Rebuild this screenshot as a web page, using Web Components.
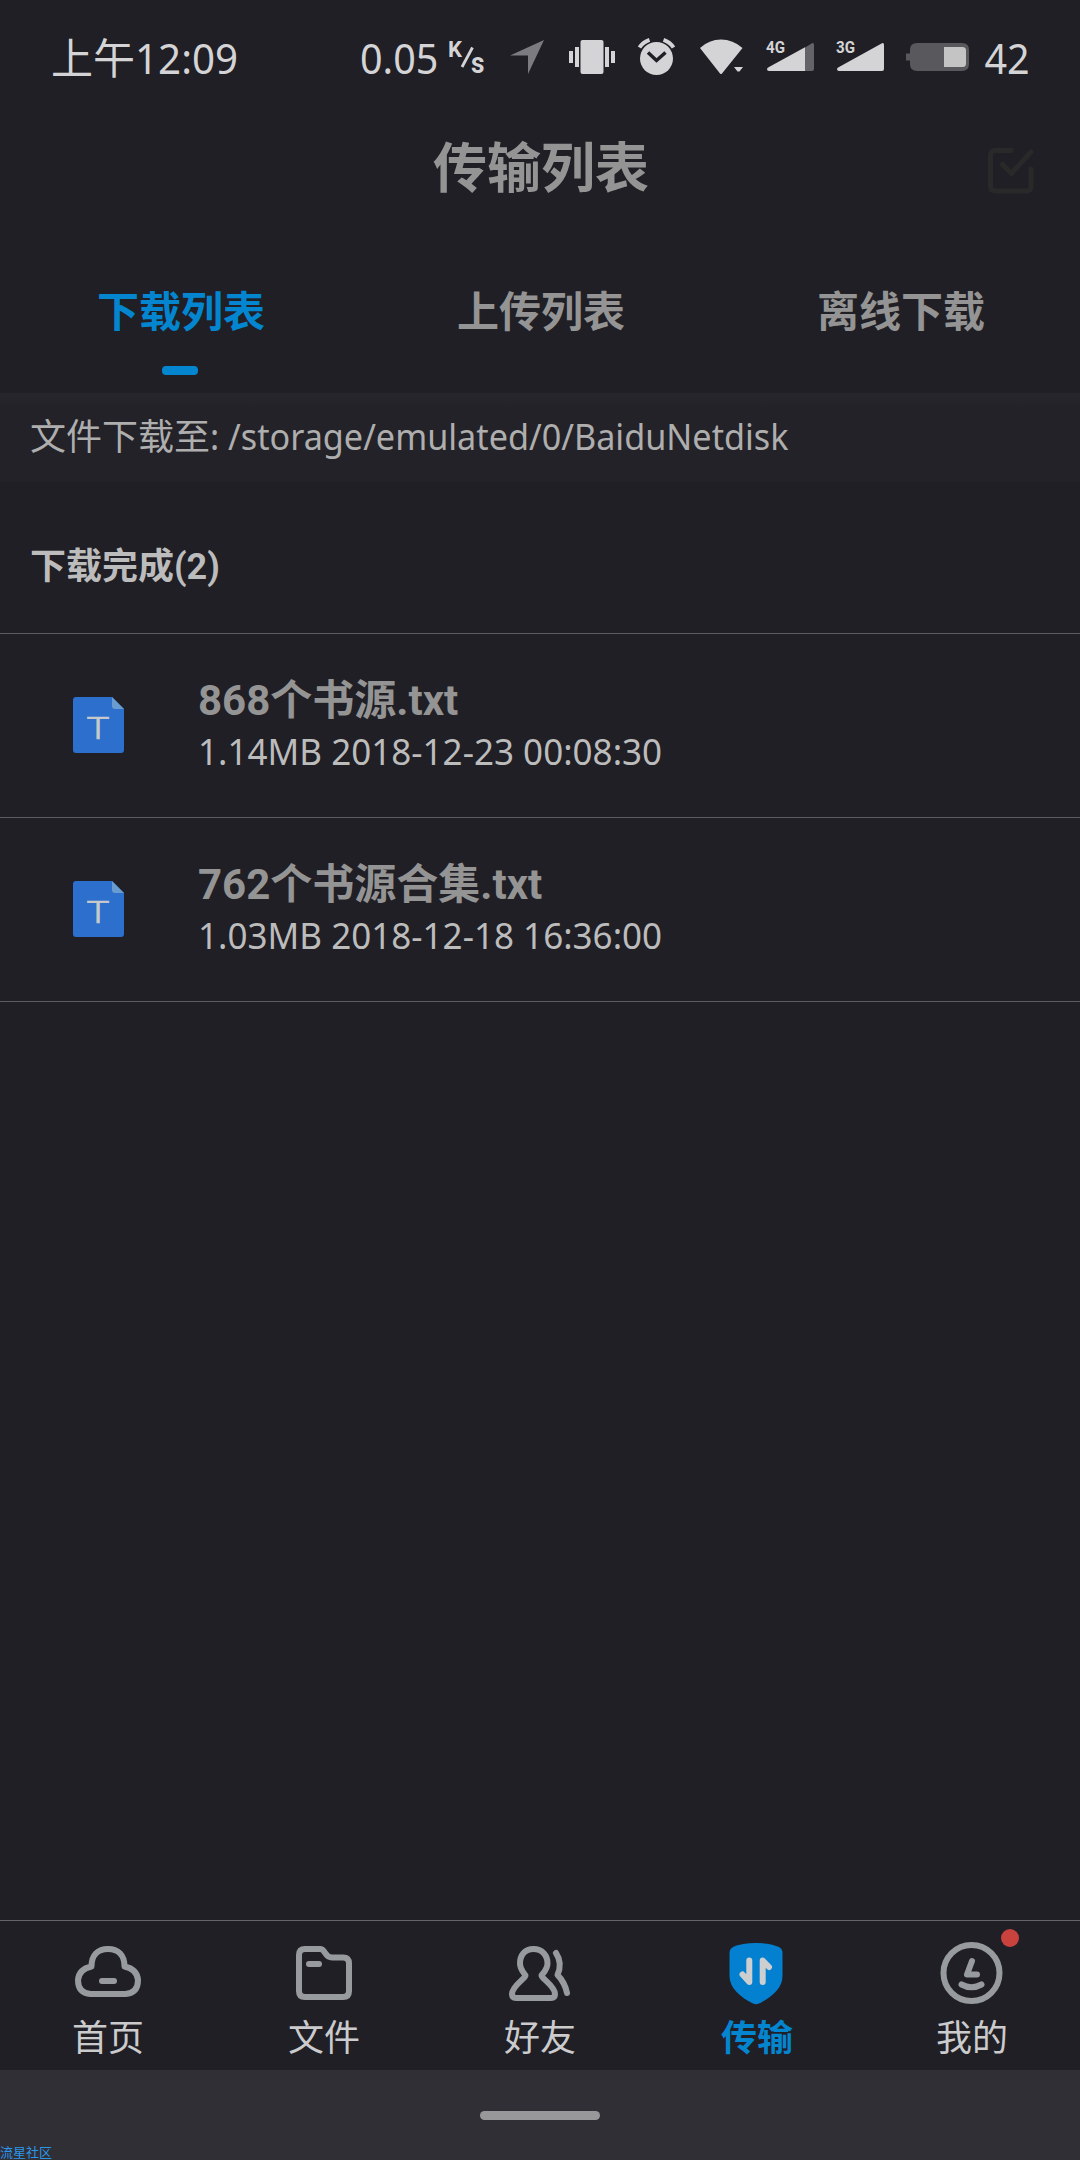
<!DOCTYPE html>
<html lang="zh-CN">
<head>
<meta charset="utf-8">
<title>传输列表</title>
<style>
	html,
	body {
		margin: 0;
		height: 100%;
		background: #201f25;
	}
	body {
		font-family: "Noto Sans", "Noto Sans CJK SC", sans-serif;
		color: #bcbcbc;
	}
</style>
</head>
<body>
<transfer-app></transfer-app>

<script>
// ─── Helpers ─────────────────────────────────────────────────────────────────

/**
 * @param {string} tag
 * @param {(el: HTMLElement) => string} render
 */
function define(tag, render) {
	customElements.define(
		tag,
		class extends HTMLElement {
			connectedCallback() {
				if (this.shadowRoot) return;
				this.attachShadow({ mode: "open" }).innerHTML = render(this);
			}
		},
	);
}

// Latin text is set slightly narrower than Noto Sans comes by default
define("narrow-text", (el) => `
	<style>
		:host {
			display: inline-block;
			transform: scaleX(${el.getAttribute("scale")});
			transform-origin: ${el.getAttribute("origin") ?? "left"};
			white-space: nowrap;
		}
	</style>
	<slot></slot>
`);

// ─── Status bar ──────────────────────────────────────────────────────────────

define("status-bar", () => `
	<style>
		:host {
			display: flex;
			align-items: center;
			height: 116px;
			box-sizing: border-box;
			padding: 0 49px 0 51px;
			font-size: 42px;
			line-height: 50px;
			color: #d4d4d6;
			white-space: nowrap;
		}
		.time { flex: 1; }
		svg { display: block; flex: none; fill: #d4d4d6; overflow: visible; }
		text { font-family: Roboto, sans-serif; font-weight: 700; }
		.rate { margin-right: 9px; }
		.level { width: 48px; }
	</style>
	<span class="time">上午<narrow-text scale=".96">12:09</narrow-text></span>
	<span class="rate"><narrow-text scale=".94" origin="right">0.05</narrow-text></span>
	<svg width="38" height="40" style="margin-right:25px">
		<text x="1" y="19" font-size="22" textLength="14" lengthAdjust="spacingAndGlyphs">K</text>
		<path d="M15 29 25.500 9.500" stroke="#d4d4d6" stroke-width="2.800"/>
		<text x="24" y="34.500" font-size="29" textLength="13.500" lengthAdjust="spacingAndGlyphs">s</text>
	</svg>
	<svg width="34" height="40" style="margin-right:25px">
		<path fill="#7c7b80" d="M0 17.500 34 2 18 36V17.500z"/>
	</svg>
	<svg width="46" height="40" style="margin-right:23px">
		<rect y="13" width="4" height="12"/>
		<rect x="6" y="9" width="4" height="20"/>
		<rect x="11.500" y="2" width="23" height="34" rx="2"/>
		<rect x="36" y="9" width="4" height="20"/>
		<rect x="42" y="13" width="4" height="12"/>
	</svg>
	<svg width="37" height="40" style="margin-right:25px">
		<circle cx="18.500" cy="20.500" r="16.500"/>
		<path fill="none" stroke="#201f25" stroke-width="3.500" d="m10 14.500 8.500 8 9-8"/>
		<path fill="none" stroke="#d4d4d6" stroke-width="4" d="M1.500 9.500Q5 4 11.500 1.800M35.500 9.500Q32 4 25.500 1.800"/>
	</svg>
	<svg width="43" height="40" style="margin-right:23px">
		<path d="M0 10Q9 1.500 21 1.500T42.500 10L22 35.500Q21 36.500 20 35.500zM34 29h9l-3.500 4.500h-2z"/>
	</svg>
	<svg width="48" height="40" style="margin-right:22px">
		<text y="15" font-size="17" textLength="19" lengthAdjust="spacingAndGlyphs">4G</text>
		<path fill="#646368" d="M39 9.500 46 5.200Q48 4.500 48 7V31q0 2-2 2H39z"/>
		<path d="M39 9.300V33H3Q1 33 1 31 1 30 3 29z"/>
	</svg>
	<svg width="48" height="40" style="margin-right:22px">
		<text y="15" font-size="17" textLength="19" lengthAdjust="spacingAndGlyphs">3G</text>
		<path d="M3 29 46 5.200Q48 4.500 48 7V31q0 2-2 2H3Q1 33 1 31 1 30 3 29z"/>
	</svg>
	<svg width="63" height="40" style="margin-right:14px">
		<path fill="#59585c" d="M0 15.500h4V12q0-7 7-7H56q7 0 7 7V26q0 7-7 7H11q-7 0-7-7V22.500H0z"/>
		<path fill="#c4c4c4" d="M38 9H56.500Q60 9 60 12.500V25.500Q60 29 56.500 29H38z"/>
	</svg>
	<span class="level"><narrow-text scale=".94" origin="center">42</narrow-text></span>
`);

// ─── Title and tabs ──────────────────────────────────────────────────────────

define("title-bar", () => `
	<style>
		:host {
			display: grid;
			grid-template-columns: 1fr auto 1fr;
			align-items: center;
			height: 106px;
			padding: 0 45px;
			color: #949494;
		}
		h1 { grid-column: 2; margin: 0 0 4px 2px; font-size: 54px; line-height: 70px; font-weight: 700; }
		svg { justify-self: end; margin-top: 3px; }
	</style>
	<h1><slot></slot></h1>
	<svg width="48" height="48" fill="none" stroke="#292929" stroke-width="5" stroke-linecap="round" stroke-linejoin="round">
		<path d="M24 3.500H8.500Q3.500 3.500 3.500 8.500V39Q3.500 44 8.500 44H39Q44 44 44 39V22"/>
		<path d="m15.500 17.500 9 9L44 5"/>
	</svg>
`);

define("tab-item", (el) => `
	<style>
		:host {
			flex: 1;
			display: flex;
			flex-direction: column;
			align-items: center;
			padding-top: 59px;
			font-size: 42px;
			line-height: 60px;
			font-weight: 700;
			color: #949494;
		}
		:host([active]) { color: #0385d0; }
		span { padding-left: 2px; }
		i { width: 36px; height: 9px; margin-top: 25px; border-radius: 4px; background: currentColor; }
	</style>
	<span><slot></slot></span>
	${el.hasAttribute("active") ? "<i></i>" : ""}
`);

define("tab-strip", () => `
	<style>
		:host { display: flex; height: 171px; }
	</style>
	<slot></slot>
`);

// ─── Download list ───────────────────────────────────────────────────────────

define("path-bar", () => `
	<style>
		:host {
			display: block;
			height: 89px;
			padding-left: 30px;
			box-sizing: border-box;
			font-size: 36px;
			line-height: 87px;
			color: #aeaeae;
			white-space: nowrap;
			background: linear-gradient(#27262b, #232228 16px);
		}
	</style>
	<slot></slot>
`);

define("list-heading", () => `
	<style>
		:host {
			display: block;
			height: 151px;
			padding: 18px 30px 0;
			box-sizing: border-box;
			font: 700 36px/134px Roboto, "Noto Sans CJK SC", sans-serif;
			color: #bcbcbc;
		}
	</style>
	<slot></slot>
`);

define("file-row", (el) => `
	<style>
		:host {
			display: flex;
			height: 184px;
			box-sizing: border-box;
			padding-left: 73px;
			border-top: 1px solid #5d5d60;
		}
		:host(:last-of-type) { height: 185px; border-bottom: 1px solid #5d5d60; }
		svg { flex: none; margin: 63px 74px 0 0; }
		.text { padding-top: 42px; line-height: 50px; white-space: nowrap; }
		.name { font-family: Roboto, "Noto Sans CJK SC", sans-serif; font-size: 42px; font-weight: 700; color: #949494; }
		.meta { padding-top: 1px; font-size: 36px; color: #bcbcbc; }
	</style>
	<svg width="51" height="56">
		<path fill="#2d6fcd" d="M3 0H39L51 12V53q0 3-3 3H3Q0 56 0 53V3Q0 0 3 0z"/>
		<path fill="#6a9ccf" d="M39 0 51 12H42q-3 0-3-3z"/>
		<text x="13.500" y="42" font-family="Roboto" font-size="31" font-weight="300" fill="#c8c9cb" stroke="#c8c9cb" stroke-width=".7" textLength="23" lengthAdjust="spacingAndGlyphs">T</text>
	</svg>
	<div class="text">
		<div class="name"><slot></slot></div>
		<div class="meta"><narrow-text scale=".973">${el.getAttribute("meta")}</narrow-text></div>
	</div>
`);

// ─── Bottom navigation ───────────────────────────────────────────────────────

// Every icon is drawn in a 72x72 box
const NAV_ICONS = {
	home: `
		<path d="M18.500 57Q6 56 6 43 7 32 19.500 29.500C19.500 18 26 12 36 12S52.500 18 52.500 29.500Q65 32 66 43 66 56 53.500 57z"/>
		<path d="M30 44H42"/>`,
	files: `
		<path d="M17 12H32C38 12 36 20.500 44 20.500H55Q61 20.500 61 26.500V54Q61 60 55 60H17Q11 60 11 54V18Q11 12 17 12z"/>
		<path d="M21 27H31"/>`,
	friends: `
		<path d="M29.500 12C21 12 16 18 16 26.500 16 33 21 37 21.500 38.500 22 41 8 49 8 57Q8 61 12 61H47Q51 61 51 57C51 49 37 41 37.500 38.500 38 37 43.500 33 43.500 26.500 43.500 18 38 12 29.500 12z"/>
		<path d="M52 16C56 22 57 30 53.500 38 58 42 62 50 63 56"/>`,
	transfer: `
		<path fill="#0380d0" stroke="none" d="M36 6Q50 6 59 10 62.500 12 62.500 16V39C62.500 51 52 60 39 66.500Q36 68 33 66.500C20 60 9.500 51 9.500 39V16Q9.500 12 13 10 22 6 36 6z"/>
		<path stroke="#cdced0" d="M29.300 23.500V45L22.500 37.500M42.700 45V23.500L49 30"/>`,
	me: `
		<circle cx="35.500" cy="36" r="28"/>
		<path d="M36 24 31 37.500H41M25.500 47.500Q35.500 53 45.500 47.500"/>`,
};

define("nav-item", (el) => `
	<style>
		:host {
			flex: 1;
			display: flex;
			flex-direction: column;
			align-items: center;
			padding-top: 16px;
			font-size: 36px;
			line-height: 50px;
			color: #cbcbcd;
		}
		:host([active]) { font-weight: 700; color: #0385d0; }
		:host([active]) .label { padding-left: 2px; }
		.icon { position: relative; height: 76px; }
		svg { display: block; fill: none; stroke: #989b9d; stroke-width: 6; stroke-linecap: round; stroke-linejoin: round; }
		.badge { position: absolute; top: -8px; left: 65px; width: 18px; height: 18px; border-radius: 50%; background: #c9423e; }
	</style>
	<div class="icon">
		<svg width="72" height="72">${NAV_ICONS[el.getAttribute("icon")]}</svg>
		${el.hasAttribute("badge") ? '<span class="badge"></span>' : ""}
	</div>
	<span class="label"><slot></slot></span>
`);

define("bottom-nav", () => `
	<style>
		:host {
			display: flex;
			height: 150px;
			box-sizing: border-box;
			border-top: 1px solid #656468;
		}
	</style>
	<slot></slot>
`);

define("gesture-bar", () => `
	<style>
		:host {
			display: flex;
			flex-direction: column;
			align-items: center;
			height: 90px;
			background: #302f35;
		}
		i { width: 120px; height: 9px; margin-top: 41px; border-radius: 5px; background: #98979a; }
		small { align-self: flex-start; margin-top: 24px; font-size: 13px; line-height: 16px; color: #2b97ea; }
	</style>
	<i></i>
	<small><slot></slot></small>
`);

// ─── App ─────────────────────────────────────────────────────────────────────

define("transfer-app", () => `
	<style>
		:host {
			display: flex;
			flex-direction: column;
			width: 1080px;
			height: 2160px;
			overflow: hidden;
			background: #201f25;
		}
		main { flex: 1; }
	</style>
	<status-bar></status-bar>
	<title-bar>传输列表</title-bar>
	<tab-strip>
		<tab-item active>下载列表</tab-item>
		<tab-item>上传列表</tab-item>
		<tab-item>离线下载</tab-item>
	</tab-strip>
	<main>
		<path-bar>文件下载至<narrow-text scale=".95">: /storage/emulated/0/BaiduNetdisk</narrow-text></path-bar>
		<list-heading>下载完成(2)</list-heading>
		<file-row meta="1.14MB 2018-12-23 00:08:30">868个书源.txt</file-row>
		<file-row meta="1.03MB 2018-12-18 16:36:00">762个书源合集.txt</file-row>
	</main>
	<bottom-nav>
		<nav-item icon="home">首页</nav-item>
		<nav-item icon="files">文件</nav-item>
		<nav-item icon="friends">好友</nav-item>
		<nav-item icon="transfer" active>传输</nav-item>
		<nav-item icon="me" badge>我的</nav-item>
	</bottom-nav>
	<gesture-bar>流星社区</gesture-bar>
`);
</script>
</body>
</html>
